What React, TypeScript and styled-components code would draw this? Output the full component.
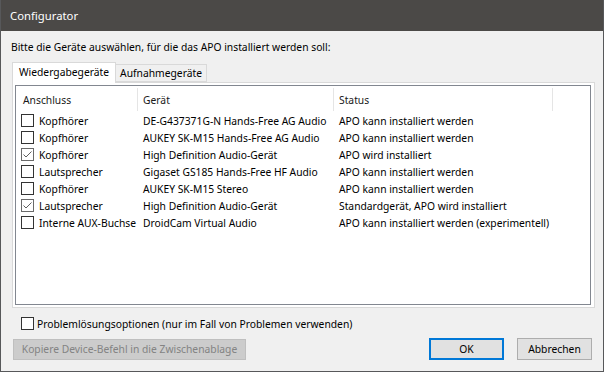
import React from "react";
import styled, { createGlobalStyle } from "styled-components";

const Global = createGlobalStyle`
  html, body { margin: 0; padding: 0; background: #f0f0f0; }
  * { box-sizing: border-box; }
  body { font-family: "Noto Sans", "Open Sans", sans-serif; font-size: 10.3px; color: #000; }
`;

const Window = styled.div`
  width: 604px;
  height: 372px;
  border: 1px solid #57585a;
  border-top: none;
  display: flex;
  flex-direction: column;
  background: #f0f0f0;
`;

const TitleBar = styled.div`
  height: 31px;
  background: #4b4947;
  color: #ffffff;
  display: flex;
  align-items: center;
  padding-left: 9px;
  font-size: 11.3px;
  flex-shrink: 0;
`;

const Body = styled.div`
  flex: 1;
  display: flex;
  flex-direction: column;
  padding: 8px 8px 11px 10px;
`;

const Instruction = styled.div`
  height: 16px;
  line-height: 16px;
  white-space: nowrap;
`;

const TabStrip = styled.div`
  display: flex;
  align-items: flex-end;
  margin-top: 7px;
  margin-left: 1px;
  height: 20px;
  position: relative;
  z-index: 1;
`;

const Tab = styled.div<{ $active?: boolean }>`
  height: ${(p) => (p.$active ? "21px" : "18px")};
  margin-bottom: ${(p) => (p.$active ? "-1px" : "0")};
  background: ${(p) => (p.$active ? "#ffffff" : "#f0f0f0")};
  border: 1px solid #d9d9d9;
  border-bottom: ${(p) => (p.$active ? "none" : "1px solid #d9d9d9")};
  border-left: ${(p) => (p.$active ? "1px solid #d9d9d9" : "none")};
  padding: ${(p) => (p.$active ? "0 6px 2px 6px" : "0 4px 0 4px")};
  display: flex;
  align-items: center;
  white-space: nowrap;
`;

const Panel = styled.div`
  margin-left: 1px;
  height: 226px;
  border: 1px solid #d9d9d9;
  background: #ffffff;
  padding: 2px 3px 2px 2px;
`;

const ListView = styled.div`
  height: 100%;
  border: 1px solid #828790;
  background: #ffffff;
  display: flex;
  flex-direction: column;
`;

const HeaderRow = styled.div`
  display: grid;
  grid-template-columns: 122px 196px 219px 1fr;
  padding-top: 2px;
  height: 26px;
  color: #1a1a1a;
`;

const HeaderCell = styled.div<{ $first?: boolean; $last?: boolean }>`
  height: 23px;
  border-right: ${(p) => (p.$last ? "none" : "1px solid #e5e5e5")};
  padding-left: ${(p) => (p.$first ? "7px" : "5px")};
  display: flex;
  align-items: center;
  white-space: nowrap;
`;

const Row = styled.div`
  display: grid;
  grid-template-columns: 122px 196px 219px 1fr;
  height: 17px;
  align-items: center;
`;

const Cell = styled.div`
  padding-left: 5px;
  display: flex;
  align-items: center;
  gap: 5px;
  white-space: nowrap;
  overflow: hidden;
`;

const Box = styled.span<{ $checked?: boolean }>`
  width: 13px;
  height: 13px;
  flex-shrink: 0;
  border: 1px solid ${(p) => (p.$checked ? "#6a6a6a" : "#333333")};
  background: #ffffff;
  display: inline-flex;
  align-items: center;
  justify-content: center;
`;

const OptionRow = styled.label`
  display: flex;
  align-items: center;
  gap: 3px;
  height: 13px;
  margin-top: 9px;
  padding-left: 10px;
  white-space: nowrap;
`;

const ButtonRow = styled.div`
  display: flex;
  align-items: center;
  margin-top: 8px;
  padding-left: 2px;
  padding-right: 3px;
  height: 22px;
`;

const Button = styled.button<{ $default?: boolean; $disabled?: boolean; $wide?: boolean }>`
  font-family: inherit;
  font-size: inherit;
  height: ${(p) => (p.$wide ? "21px" : "22px")};
  width: ${(p) => (p.$wide ? "233px" : "75px")};
  padding: 0;
  background: ${(p) => (p.$disabled ? "#cccccc" : "#e1e1e1")};
  color: ${(p) => (p.$disabled ? "#838383" : "#000000")};
  border: ${(p) =>
    p.$default ? "2px solid #0078d7" : p.$disabled ? "1px solid #bfbfbf" : "1px solid #adadad"};
  margin-left: ${(p) => (p.$wide ? "0" : "13px")};
  display: flex;
  align-items: center;
  justify-content: center;
  white-space: nowrap;
`;

const Spacer = styled.div`
  flex: 1;
`;

const Check = ({ color }: { color: string }) => (
  <svg width="11" height="11" viewBox="0 0 11 11">
    <path d="M1.5 5.5 L4 8 L9.5 2.5" fill="none" stroke={color} strokeWidth="1" />
  </svg>
);

const rows = [
  { c: false, a: "Kopfhörer", g: "DE-G437371G-N Hands-Free AG Audio", s: "APO kann installiert werden" },
  { c: false, a: "Kopfhörer", g: "AUKEY SK-M15 Hands-Free AG Audio", s: "APO kann installiert werden" },
  { c: true, a: "Kopfhörer", g: "High Definition Audio-Gerät", s: "APO wird installiert" },
  { c: false, a: "Lautsprecher", g: "Gigaset GS185 Hands-Free HF Audio", s: "APO kann installiert werden" },
  { c: false, a: "Kopfhörer", g: "AUKEY SK-M15 Stereo", s: "APO kann installiert werden" },
  { c: true, a: "Lautsprecher", g: "High Definition Audio-Gerät", s: "Standardgerät, APO wird installiert" },
  { c: false, a: "Interne AUX-Buchse", g: "DroidCam Virtual Audio", s: "APO kann installiert werden (experimentell)" },
];

export default function App() {
  return (
    <>
      <Global />
      <Window>
        <TitleBar>Configurator</TitleBar>
        <Body>
          <Instruction>Bitte die Geräte auswählen, für die das APO installiert werden soll:</Instruction>
          <TabStrip>
            <Tab $active>Wiedergabegeräte</Tab>
            <Tab>Aufnahmegeräte</Tab>
          </TabStrip>
          <Panel>
            <ListView>
              <HeaderRow>
                <HeaderCell $first>Anschluss</HeaderCell>
                <HeaderCell>Gerät</HeaderCell>
                <HeaderCell>Status</HeaderCell>
                <HeaderCell $last />
              </HeaderRow>
              {rows.map((r, i) => (
                <Row key={i}>
                  <Cell>
                    <Box $checked={r.c}>{r.c && <Check color="#5f5f5f" />}</Box>
                    {r.a}
                  </Cell>
                  <Cell>{r.g}</Cell>
                  <Cell>{r.s}</Cell>
                  <Cell />
                </Row>
              ))}
            </ListView>
          </Panel>
          <OptionRow>
            <Box />
            Problemlösungsoptionen (nur im Fall von Problemen verwenden)
          </OptionRow>
          <ButtonRow>
            <Button $wide $disabled disabled>
              Kopiere Device-Befehl in die Zwischenablage
            </Button>
            <Spacer />
            <Button $default>OK</Button>
            <Button>Abbrechen</Button>
          </ButtonRow>
        </Body>
      </Window>
    </>
  );
}
